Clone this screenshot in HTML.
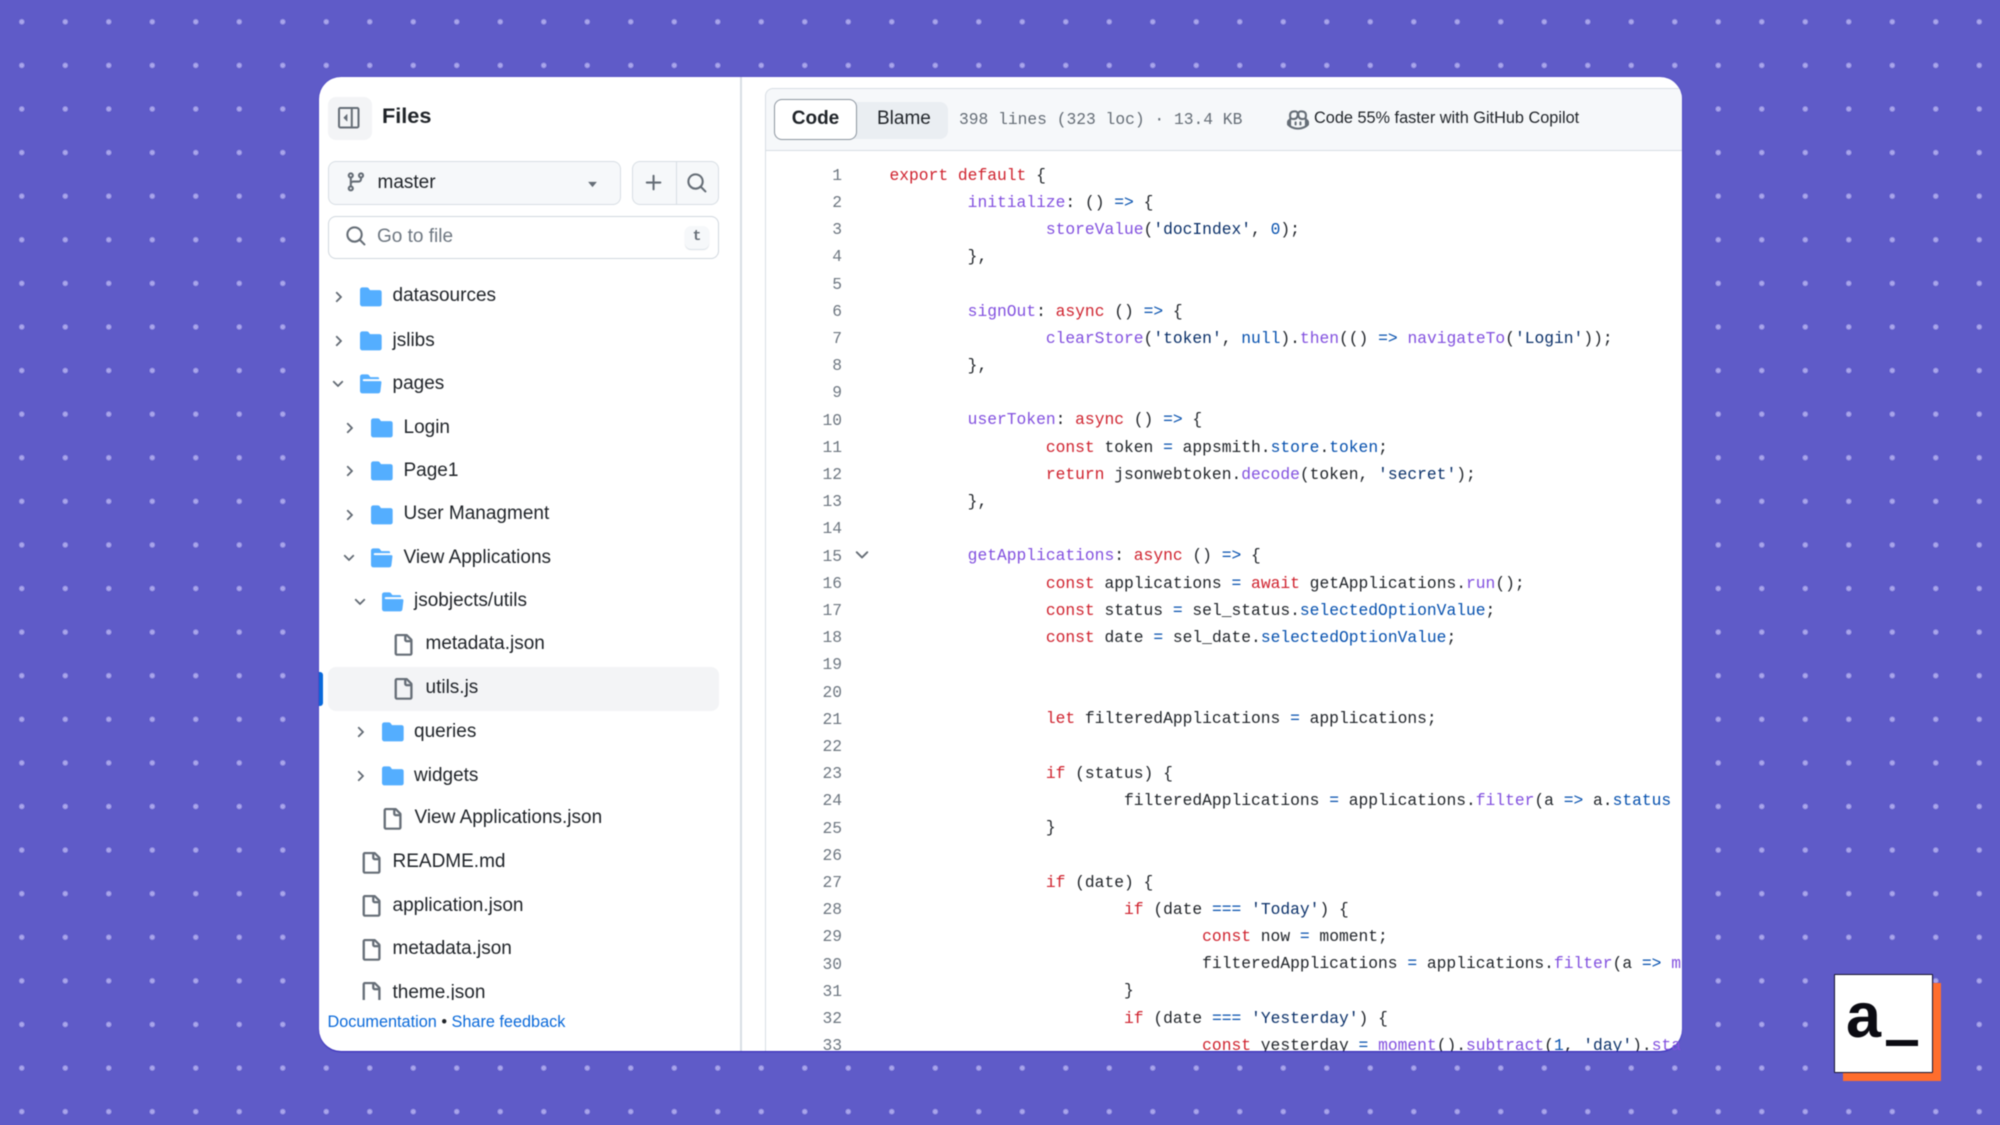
<!DOCTYPE html>
<html lang="en"><head><meta charset="utf-8"><title>Files</title>
<style>
html,body{margin:0;padding:0;width:2000px;height:1125px;overflow:hidden}
body{position:relative;background-color:#5f5bc8;background-image:radial-gradient(circle at center,#a8a4ea 0,#a8a4ea 1.5px,rgba(168,164,234,0) 3.6px);background-size:43.5px 43.6px;background-position:0 0;font-family:"Liberation Sans",sans-serif;color:#1f2328}
svg{position:absolute;display:block;overflow:visible}
#card{position:absolute;left:319px;top:77px;width:1362.5px;height:974px;background:#fff;border-radius:22px;box-shadow:0 1px 1px 0 #2f25b8,0 0 1px #2f25b8;overflow:hidden}
#wrap{position:absolute;left:0;top:0;width:2000px;height:1125px;filter:blur(.5px)}
.abs{position:absolute}
#tree{position:absolute;left:0;top:0;width:741px;height:1000px;overflow:hidden}
.r{position:absolute;left:0;width:741px;height:44px;line-height:43px;font-size:19px;white-space:nowrap}
.r span{position:absolute;top:-.5px}
.r svg{top:11px}
.ch{width:16px;height:16px;top:14px!important;fill:#656d76;stroke:#656d76;stroke-width:.5}
.ic{width:21.8px;height:21.8px;fill:#54aeff}
.fi{width:21.8px;height:21.8px;fill:#656d76;stroke:#656d76;stroke-width:.2}
#code{position:absolute;left:889.5px;top:161.7px;width:791.5px;height:889px;overflow:hidden;font:16.3px/27.2px "Liberation Mono",monospace;white-space:pre;tab-size:8;color:#1f2328}
#code div{height:27.2px}
#nums{position:absolute;left:790px;top:161.7px;width:52px;height:889px;overflow:hidden;font:16.3px/27.2px "Liberation Mono",monospace;color:#6e7781;text-align:right}
.k{color:#cf222e}.f{color:#8250df}.c{color:#0550ae}.s{color:#0a3069}
</style></head>
<body>
<svg width="0" height="0" style="position:absolute"><defs>
<symbol id="cr" viewBox="0 0 16 16"><path d="M6.22 3.22a.75.75 0 0 1 1.06 0l4.25 4.25a.75.75 0 0 1 0 1.06l-4.25 4.25a.751.751 0 0 1-1.042-.018.751.751 0 0 1-.018-1.042L9.94 8 6.22 4.28a.75.75 0 0 1 0-1.06Z"/></symbol>
<symbol id="cd" viewBox="0 0 16 16"><path d="M12.78 5.22a.749.749 0 0 1 0 1.06l-4.25 4.25a.749.749 0 0 1-1.06 0L3.22 6.28a.749.749 0 1 1 1.06-1.06L8 8.939l3.72-3.719a.749.749 0 0 1 1.06 0Z"/></symbol>
<symbol id="fc" viewBox="0 0 16 16"><path d="M1.75 1A1.75 1.75 0 0 0 0 2.75v10.5C0 14.216.784 15 1.75 15h12.5A1.75 1.75 0 0 0 16 13.25v-8.5A1.75 1.75 0 0 0 14.25 3H7.5a.25.25 0 0 1-.2-.1l-.9-1.2C6.07 1.26 5.55 1 5 1H1.75Z"/></symbol>
<symbol id="fo" viewBox="0 0 16 16"><path d="M.513 1.513A1.75 1.75 0 0 1 1.75 1h3.5c.55 0 1.07.26 1.4.7l.9 1.2a.25.25 0 0 0 .2.1H13a1 1 0 0 1 1 1v.5H2.75a.75.75 0 0 0 0 1.5h11.978a1 1 0 0 1 .994 1.117L15 13.25A1.75 1.75 0 0 1 13.25 15H1.75A1.75 1.75 0 0 1 0 13.25V2.75c0-.464.184-.91.513-1.237Z"/></symbol>
<symbol id="fl" viewBox="0 0 16 16"><path d="M2 1.75C2 .784 2.784 0 3.75 0h6.586c.464 0 .909.184 1.237.513l2.914 2.914c.329.328.513.773.513 1.237v9.586A1.75 1.75 0 0 1 13.25 16h-9.5A1.75 1.75 0 0 1 2 14.25Zm1.75-.25a.25.25 0 0 0-.25.25v12.5c0 .138.112.25.25.25h9.5a.25.25 0 0 0 .25-.25V6h-2.75A1.75 1.75 0 0 1 9 4.25V1.5Zm6.75.062V4.25c0 .138.112.25.25.25h2.688l-.011-.013-2.914-2.914-.013-.011Z"/></symbol>
<symbol id="se" viewBox="0 0 16 16"><path d="M10.68 11.74a6 6 0 0 1-7.922-8.982 6 6 0 0 1 8.982 7.922l3.04 3.04a.749.749 0 0 1-.326 1.275.749.749 0 0 1-.734-.215ZM11.5 7a4.499 4.499 0 1 0-8.997 0A4.499 4.499 0 0 0 11.5 7Z"/></symbol>
</defs></svg>

<div id="wrap">
<div id="card">
<div class="abs" style="left:445.5px;top:11px;width:920px;height:63px;box-sizing:border-box;background:#f6f8fa;border:1.4px solid #d8dee4;border-right:0;border-radius:8px 0 0 0"></div>
</div>

<!-- sidebar header -->
<div class="abs" style="left:328px;top:96.5px;width:43.5px;height:43.5px;background:#f3f4f6;border-radius:8px"></div>
<svg viewBox="0 0 16 16" style="left:338px;top:107px;width:21.5px;height:21.5px;fill:#656d76"><path d="M7 5.6v4.8a.25.25 0 0 1-.43.18L4.18 8.18a.25.25 0 0 1 0-.36l2.39-2.4A.25.25 0 0 1 7 5.6Z"/><path d="M1.75 0h12.5C15.216 0 16 .784 16 1.75v12.5A1.75 1.75 0 0 1 14.25 16H1.75A1.75 1.75 0 0 1 0 14.25V1.75C0 .784.784 0 1.75 0ZM1.5 1.75v12.5c0 .138.112.25.25.25H9.5v-13H1.75a.25.25 0 0 0-.25.25ZM11 14.5h3.25a.25.25 0 0 0 .25-.25V1.75a.25.25 0 0 0-.25-.25H11Z"/></svg>
<div class="abs" style="left:382px;top:101px;font-size:21.7px;font-weight:700;line-height:30px;color:#1f2328">Files</div>

<!-- branch -->
<div class="abs" style="left:328px;top:161px;width:293px;height:44px;box-sizing:border-box;background:#f6f8fa;border:1.4px solid #d8dee4;border-radius:8px"></div>
<svg viewBox="0 0 16 16" style="left:345px;top:171px;width:21.8px;height:21.8px;fill:#656d76"><path d="M9.5 3.25a2.25 2.25 0 1 1 3 2.122V6A2.5 2.5 0 0 1 10 8.5H6a1 1 0 0 0-1 1v1.128a2.251 2.251 0 1 1-1.5 0V5.372a2.25 2.25 0 1 1 1.5 0v1.836A2.493 2.493 0 0 1 6 7h4a1 1 0 0 0 1-1v-.628A2.25 2.25 0 0 1 9.5 3.25Zm-6 0a.75.75 0 1 0 1.5 0 .75.75 0 0 0-1.5 0Zm8.25-.75a.75.75 0 1 0 0 1.5.75.75 0 0 0 0-1.5ZM4.25 12a.75.75 0 1 0 0 1.5.75.75 0 0 0 0-1.5Z"/></svg>
<div class="abs" style="left:377.5px;top:161px;font-size:19px;line-height:43px;color:#1f2328">master</div>
<svg viewBox="0 0 12 8" style="left:587px;top:181px;width:11px;height:7px;fill:#656d76"><path d="M1 1h10L6 7Z"/></svg>

<!-- + / search -->
<div class="abs" style="left:632px;top:161px;width:87px;height:44px;box-sizing:border-box;background:#f6f8fa;border:1.4px solid #d8dee4;border-radius:8px"></div>
<div class="abs" style="left:675.5px;top:162px;width:1.4px;height:42px;background:#d8dee4"></div>
<svg viewBox="0 0 16 16" style="left:643px;top:172px;width:21.8px;height:21.8px;fill:#656d76"><path d="M7.75 2a.75.75 0 0 1 .75.75V7h4.25a.75.75 0 0 1 0 1.5H8.5v4.25a.75.75 0 0 1-1.5 0V8.5H2.75a.75.75 0 0 1 0-1.5H7V2.75A.75.75 0 0 1 7.75 2Z"/></svg>
<svg style="left:686px;top:172px;width:21.8px;height:21.8px;fill:#656d76"><use href="#se"/></svg>

<!-- go to file -->
<div class="abs" style="left:328px;top:216px;width:391px;height:43px;box-sizing:border-box;background:#fff;border:1.4px solid #d0d7de;border-radius:8px"></div>
<svg style="left:345px;top:225px;width:21.8px;height:21.8px;fill:#656d76"><use href="#se"/></svg>
<div class="abs" style="left:377px;top:214.5px;font-size:19px;line-height:43px;color:#6e7781">Go to file</div>
<div class="abs" style="left:685px;top:226px;width:24px;height:23px;background:#f6f8fa;border-radius:6px;box-shadow:0 1px 1px #d8dee4;font:14.5px/22.5px 'Liberation Mono',monospace;font-weight:700;text-align:center;color:#656d76">t</div>

<!-- selected row -->
<div class="abs" style="left:328px;top:667px;width:391px;height:43.5px;background:#f3f4f6;border-radius:8px"></div>
<div class="abs" style="left:319px;top:672px;width:3.5px;height:34px;background:#0969da;border-radius:0 3px 3px 0"></div>

<!-- tree -->
<div id="tree">
<div class="r" style="top:275px"><svg class="ch" style="left:330px"><use href="#cr"/></svg><svg class="ic" style="left:360px"><use href="#fc"/></svg><span style="left:392.5px;top:-1px">datasources</span></div>
<div class="r" style="top:318.5px"><svg class="ch" style="left:330px"><use href="#cr"/></svg><svg class="ic" style="left:360px"><use href="#fc"/></svg><span style="left:392.5px;top:.5px">jslibs</span></div>
<div class="r" style="top:362px"><svg class="ch" style="left:330px"><use href="#cd"/></svg><svg class="ic" style="left:360px"><use href="#fo"/></svg><span style="left:392.5px">pages</span></div>
<div class="r" style="top:405.5px"><svg class="ch" style="left:340.5px"><use href="#cr"/></svg><svg class="ic" style="left:371px"><use href="#fc"/></svg><span style="left:403.5px;top:.5px">Login</span></div>
<div class="r" style="top:449px"><svg class="ch" style="left:340.5px"><use href="#cr"/></svg><svg class="ic" style="left:371px"><use href="#fc"/></svg><span style="left:403.5px">Page1</span></div>
<div class="r" style="top:492.5px"><svg class="ch" style="left:340.5px"><use href="#cr"/></svg><svg class="ic" style="left:371px"><use href="#fc"/></svg><span style="left:403.5px">User Managment</span></div>
<div class="r" style="top:536px"><svg class="ch" style="left:340.5px"><use href="#cd"/></svg><svg class="ic" style="left:371px"><use href="#fo"/></svg><span style="left:403.5px">View Applications</span></div>
<div class="r" style="top:579.5px"><svg class="ch" style="left:351.5px"><use href="#cd"/></svg><svg class="ic" style="left:381.5px"><use href="#fo"/></svg><span style="left:414px">jsobjects/utils</span></div>
<div class="r" style="top:623px"><svg class="fi" style="left:392px"><use href="#fl"/></svg><span style="left:425.5px;top:-1px">metadata.json</span></div>
<div class="r" style="top:666.5px"><svg class="fi" style="left:392px"><use href="#fl"/></svg><span style="left:425.5px">utils.js</span></div>
<div class="r" style="top:710px"><svg class="ch" style="left:351.5px"><use href="#cr"/></svg><svg class="ic" style="left:381.5px"><use href="#fc"/></svg><span style="left:414px">queries</span></div>
<div class="r" style="top:753.5px"><svg class="ch" style="left:351.5px"><use href="#cr"/></svg><svg class="ic" style="left:381.5px"><use href="#fc"/></svg><span style="left:414px;top:.5px">widgets</span></div>
<div class="r" style="top:797px"><svg class="fi" style="left:381.3px"><use href="#fl"/></svg><span style="left:414.5px;top:-1px">View Applications.json</span></div>
<div class="r" style="top:840.5px"><svg class="fi" style="left:360px"><use href="#fl"/></svg><span style="left:392.5px">README.md</span></div>
<div class="r" style="top:884px"><svg class="fi" style="left:360px"><use href="#fl"/></svg><span style="left:392.5px">application.json</span></div>
<div class="r" style="top:927.5px"><svg class="fi" style="left:360px"><use href="#fl"/></svg><span style="left:392.5px">metadata.json</span></div>
<div class="r" style="top:971px"><svg class="fi" style="left:360px"><use href="#fl"/></svg><span style="left:392.5px">theme.json</span></div>
</div>

<div class="abs" style="left:327.5px;top:1012px;font-size:16.25px;line-height:20px;color:#1f2328;white-space:nowrap"><span style="color:#0969da">Documentation</span> • <span style="color:#0969da">Share feedback</span></div>

<!-- divider -->
<div class="abs" style="left:740.3px;top:77px;width:1.6px;height:974px;background:#d8dee4"></div>

<!-- code header -->
<div class="abs" style="left:764.5px;top:150px;width:1.4px;height:901px;background:#d8dee4"></div>
<div class="abs" style="left:774px;top:102px;width:174px;height:37px;background:#eaeef2;border-radius:8px"></div>
<div class="abs" style="left:774px;top:99px;width:83px;height:41px;box-sizing:border-box;background:#fff;border:1.4px solid #8c959f;border-radius:8px;font-size:19px;font-weight:700;line-height:37px;text-align:center;color:#1f2328">Code</div>
<div class="abs" style="left:877px;top:99.5px;font-size:19px;line-height:38px;color:#1f2328">Blame</div>
<div class="abs" style="left:959px;top:105.5px;font:16.3px/27px 'Liberation Mono',monospace;color:#656d76;white-space:pre">398 lines (323 loc) · 13.4 KB</div>
<svg viewBox="0 0 16 16" style="left:1286.5px;top:109px;width:22px;height:22px;fill:#656d76"><path d="M7.998 15.035c-4.562 0-7.873-2.914-7.998-3.749V9.338c.085-.628.677-1.686 1.588-2.065.013-.07.024-.143.036-.218.029-.183.06-.384.126-.612-.201-.508-.254-1.084-.254-1.656 0-.87.128-1.769.693-2.484.579-.733 1.494-1.124 2.724-1.261 1.206-.134 2.262.034 2.944.765.05.053.096.108.139.165.044-.057.094-.112.143-.165.682-.731 1.738-.899 2.944-.765 1.23.137 2.145.528 2.724 1.261.566.715.693 1.614.693 2.484 0 .572-.053 1.148-.254 1.656.066.228.098.429.126.612.012.076.024.148.037.218.924.385 1.522 1.471 1.591 2.095v1.872c0 .766-3.351 3.795-8.002 3.795Zm0-1.485c2.28 0 4.584-1.11 5.002-1.433V7.862l-.023-.116c-.49.21-1.075.291-1.727.291-1.146 0-2.059-.327-2.71-.991A3.222 3.222 0 0 1 8 6.303a3.24 3.24 0 0 1-.544.743c-.65.664-1.563.991-2.71.991-.652 0-1.236-.081-1.727-.291l-.023.116v4.255c.419.323 2.722 1.433 5.002 1.433ZM6.762 2.83c-.193-.206-.637-.413-1.682-.297-1.019.113-1.479.404-1.713.7-.247.312-.369.789-.369 1.554 0 .793.129 1.171.308 1.371.162.181.519.379 1.442.379.853 0 1.339-.235 1.638-.54.315-.322.527-.827.617-1.553.117-.935-.037-1.395-.241-1.614Zm4.155-.297c-1.044-.116-1.488.091-1.681.297-.204.219-.359.679-.242 1.614.091.726.303 1.231.618 1.553.299.305.784.54 1.638.54.922 0 1.28-.198 1.442-.379.179-.2.308-.578.308-1.371 0-.765-.123-1.242-.37-1.554-.233-.296-.693-.587-1.713-.7Z"/><path d="M6.25 9.037a.75.75 0 0 1 .75.75v1.501a.75.75 0 0 1-1.5 0V9.787a.75.75 0 0 1 .75-.75Zm4.25.75v1.501a.75.75 0 0 1-1.5 0V9.787a.75.75 0 0 1 1.5 0Z"/></svg>
<div class="abs" style="left:1314px;top:105px;font-size:16.3px;line-height:27px;color:#1f2328;white-space:nowrap">Code 55% faster with GitHub Copilot</div>

<!-- line numbers -->
<div id="nums">1<br>2<br>3<br>4<br>5<br>6<br>7<br>8<br>9<br>10<br>11<br>12<br>13<br>14<br>15<br>16<br>17<br>18<br>19<br>20<br>21<br>22<br>23<br>24<br>25<br>26<br>27<br>28<br>29<br>30<br>31<br>32<br>33</div>
<svg viewBox="0 0 16 16" style="left:852px;top:545px;width:20px;height:20px;fill:#656d76"><use href="#cd"/></svg>

<!-- code -->
<div id="code"><div><span class="k">export</span> <span class="k">default</span> {</div><div>	<span class="f">initialize</span>: () <span class="c">=&gt;</span> {</div><div>		<span class="f">storeValue</span>(<span class="s">'docIndex'</span>, <span class="c">0</span>);</div><div>	},</div><div> </div><div>	<span class="f">signOut</span>: <span class="k">async</span> () <span class="c">=&gt;</span> {</div><div>		<span class="f">clearStore</span>(<span class="s">'token'</span>, <span class="c">null</span>).<span class="f">then</span>(() <span class="c">=&gt;</span> <span class="f">navigateTo</span>(<span class="s">'Login'</span>));</div><div>	},</div><div> </div><div>	<span class="f">userToken</span>: <span class="k">async</span> () <span class="c">=&gt;</span> {</div><div>		<span class="k">const</span> token <span class="c">=</span> appsmith.<span class="c">store</span>.<span class="c">token</span>;</div><div>		<span class="k">return</span> jsonwebtoken.<span class="f">decode</span>(token, <span class="s">'secret'</span>);</div><div>	},</div><div> </div><div>	<span class="f">getApplications</span>: <span class="k">async</span> () <span class="c">=&gt;</span> {</div><div>		<span class="k">const</span> applications <span class="c">=</span> <span class="k">await</span> getApplications.<span class="f">run</span>();</div><div>		<span class="k">const</span> status <span class="c">=</span> sel_status.<span class="c">selectedOptionValue</span>;</div><div>		<span class="k">const</span> date <span class="c">=</span> sel_date.<span class="c">selectedOptionValue</span>;</div><div> </div><div> </div><div>		<span class="k">let</span> filteredApplications <span class="c">=</span> applications;</div><div> </div><div>		<span class="k">if</span> (status) {</div><div>			filteredApplications <span class="c">=</span> applications.<span class="f">filter</span>(a <span class="c">=&gt;</span> a.<span class="c">status</span> <span class="c">===</span> status);</div><div>		}</div><div> </div><div>		<span class="k">if</span> (date) {</div><div>			<span class="k">if</span> (date <span class="c">===</span> <span class="s">'Today'</span>) {</div><div>				<span class="k">const</span> now <span class="c">=</span> moment;</div><div>				filteredApplications <span class="c">=</span> applications.<span class="f">filter</span>(a <span class="c">=&gt;</span> <span class="f">moment</span>(a.date));</div><div>			}</div><div>			<span class="k">if</span> (date <span class="c">===</span> <span class="s">'Yesterday'</span>) {</div><div>				<span class="k">const</span> yesterday <span class="c">=</span> <span class="f">moment</span>().<span class="f">subtract</span>(<span class="c">1</span>, <span class="s">'day'</span>).<span class="f">startOf</span>(<span class="s">'day'</span>);</div></div>

<!-- logo -->
<div class="abs" style="left:1843px;top:983px;width:98px;height:98px;background:#ff6d2d"></div>
<div class="abs" style="left:1834px;top:974px;width:99px;height:99px;box-sizing:border-box;background:#fff;border:1px solid #15132e;border-radius:1px"></div>
<div class="abs" style="left:1846px;top:981px;font-size:63px;line-height:70px;font-weight:700;color:#0b0b12">a</div>
<div class="abs" style="left:1885.5px;top:1039.5px;width:32.5px;height:6.5px;background:#0b0b12"></div>
</div>
</body></html>
